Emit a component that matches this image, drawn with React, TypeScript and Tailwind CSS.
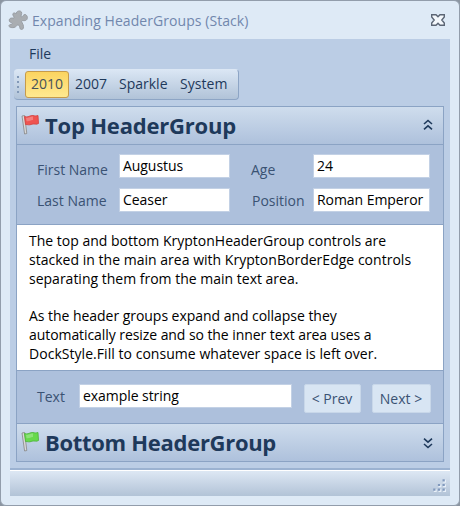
import type { ReactNode } from "react";

function Header({ title, color, dark, down }: { title: ReactNode; color: string; dark: string; down?: boolean }) {
  return (
    <div className="flex h-[37px] shrink-0 items-center bg-gradient-to-b from-[#cfdded] to-[#aec1dc] pr-[9px] pl-[4px]">
      <svg width="19" height="21" viewBox="0 0 19 21" className="-mt-[2px] shrink-0">
        <path d="M1 2 L3.6 1.5 L5.8 19.5 L3.6 20 Z" fill="#d8d8d8" stroke="#858585" strokeWidth="0.8" />
        <path d="M3.5 2.5 C7 4 9 1 12 1.5 C14 2 15 2 17 1.5 L17.5 9.5 C15 11 14 9.5 11 10.2 C8 11.5 7 10.5 4.5 10.5 Z" fill={color} stroke={dark} strokeWidth="0.8" />
        <path d="M5 3.5 C8 4.5 9 2 12 2.5 L12 6 C9 6 8 8 5.5 7 Z" fill="#fff" opacity="0.25" />
      </svg>
      {title}
      <svg width="12" height="12" viewBox="0 0 12 12" className={down ? "mt-px ml-auto rotate-180" : "-mt-px ml-auto"} fill="none" stroke="#1e395b" strokeWidth="1.6">
        <path d="M2 5 L6 1.5 L10 5 M2 10.3 L6 6.8 L10 10.3" />
      </svg>
    </div>
  );
}

function Field({ className, children }: { className: string; children: ReactNode }) {
  return (
    <div className={`flex h-[24px] items-center border border-[#c3d1e5] bg-white pb-[2px] pl-[3px] tracking-[-0.06px] text-black ${className}`}>{children}</div>
  );
}

const body = [
  ["The top and bottom KryptonHeaderGroup controls are", "tracking-[0px]"],
  ["stacked in the main area with KryptonBorderEdge controls", "tracking-[0.02px]"],
  ["separating them from the main text area.", "tracking-[0px]"],
  ["\u00a0", ""],
  ["As the header groups expand and collapse they", "tracking-[-0.04px]"],
  ["automatically resize and so the inner text area uses a", "tracking-[-0.07px]"],
  ["DockStyle.Fill to consume whatever space is left over.", "tracking-[0.04px]"],
];

export default function App() {
  return (
    <div className="h-[506px] w-[460px] bg-[#8b95a1] font-['Open_Sans','Noto_Sans',sans-serif] text-[14px] leading-[19px] whitespace-nowrap text-[#1e395b]">
      <div className="flex h-full flex-col rounded-[6px] border border-[#929dab] bg-[#deeaf6] px-[9px] pb-[9px]">
        <div className="flex h-[38px] shrink-0 items-center pr-[5px]">
          <svg width="20" height="21" viewBox="0 0 20 21" className="-ml-[2px] shrink-0">
            <path d="M8 4 C8 1 12 0 13.5 2 C14.5 4 12 6 13.5 7 C15 7 15 4 17.5 4.5 C20 6 20 9.5 17.5 10.5 C15.5 11 14.5 10 13.5 11.5 L15 14.5 C16 17 15.5 19.5 13.5 19.5 C11 19.5 12.5 16 10.5 15 C8.5 14.5 8.5 17 6 17.5 C3 18 0.5 17 1 15.5 C1.5 14 4 14.5 4.5 13.5 C4 12 1 13 1.2 10 C2 7 5 8.5 6 8 C7 7 4 5.5 5 3.5 C6 2.5 7.5 3 8 4 Z" fill="#a9adb1" stroke="#999ea4" strokeWidth="1" />
          </svg>
          <span className="ml-[4px] tracking-[0.06px] text-[#7187ad]">Expanding HeaderGroups (Stack)</span>
          <svg width="14" height="12" viewBox="0 0 14 12" className="ml-auto" fill="#f4f8fc" stroke="#5c6675" strokeWidth="1.4">
            <path d="M0.7 0.7 H5 L7 2.8 L9 0.7 H13.3 V2.9 L10.8 6 L13.3 9.1 V11.3 H9 L7 9.2 L5 11.3 H0.7 V9.1 L3.2 6 L0.7 2.9 Z" />
          </svg>
        </div>
        <div className="flex min-h-0 flex-1 flex-col bg-[#bbcde5]">
          <div className="flex h-[30px] shrink-0 items-center pb-[2px] pl-[19px]">File</div>
          <div className="ml-[4px] flex h-[31px] w-[225px] shrink-0 items-center rounded-[4px] border-t border-r border-b border-t-[#dce7f4] border-r-[#8da5c5] border-b-[#8da5c5] bg-gradient-to-b from-[#dae6f4] to-[#b1c3d8]">
            <div className="ml-[3px] flex h-[18px] w-[3px] flex-col justify-between">
              <i className="h-[2px] w-[2px] bg-[#8299b8]" />
              <i className="h-[2px] w-[2px] bg-[#8299b8]" />
              <i className="h-[2px] w-[2px] bg-[#8299b8]" />
              <i className="h-[2px] w-[2px] bg-[#8299b8]" />
            </div>
            <div className="ml-[5px] flex h-[27px] w-[44px] items-center justify-center rounded-[3px] border border-[#c69b4b] bg-gradient-to-b from-[#fbd45f] to-[#ffe990] pb-[2px] text-[#45525a]">2010</div>
            <span className="ml-[6px] w-[44px] pb-[2px]">2007</span>
            <span className="w-[61px] pb-[2px]">Sparkle</span>
            <span className="pb-[2px] tracking-[0.05px]">System</span>
          </div>
          <div className="mt-[6px] mr-[6px] ml-[6px] flex h-[356px] shrink-0 flex-col border border-[#8ba3c4]">
            <Header title={<b className="ml-[5px] text-[22px] font-bold tracking-[-0.2px]">Top HeaderGroup</b>} color="#ef5350" dark="#d3403e" />
            <div className="grid h-[81px] shrink-0 auto-rows-[24px] grid-cols-[82px_132px_62px_117px] items-start gap-y-[10px] border-y border-[#8ba3c4] bg-[#adc0dc] pt-[9px] pl-[20px] text-[#3a5273]">
              <span className="pt-[6px]">First Name</span><Field className="w-[111px]">Augustus</Field>
              <span className="pt-[6px]">Age</span><Field className="w-[117px]">24</Field>
              <span className="pt-[3px]">Last Name</span><Field className="w-[111px]">Ceaser</Field>
              <span className="pt-[3px] pl-px">Position</span><Field className="w-[117px]">Roman Emperor</Field>
            </div>
            <div className="h-[145px] shrink-0 bg-white pt-[7px] pl-[12px] leading-[18.75px] text-black">
              {body.map(([t, c], i) => <div key={i}><span className={c}>{t}</span></div>)}
            </div>
            <div className="flex h-[54px] shrink-0 border-y border-[#8ba3c4] bg-[#adc0dc] pt-[13px] pl-[20px] text-[#3a5273]">
              <span className="w-[42px] pt-[3px]">Text</span>
              <Field className="w-[213px]">example string</Field>
              <div className="ml-[12px] flex h-[29px] w-[57px] items-center justify-center rounded-[2px] border border-[#c8d7e9] bg-[#d8e5f3] pr-px pb-px">&lt; Prev</div>
              <div className="ml-[11px] flex h-[29px] w-[59px] items-center justify-center rounded-[2px] border border-[#c8d7e9] bg-[#d8e5f3] pr-px pb-px">Next &gt;</div>
            </div>
            <Header title={<b className="ml-[5px] text-[22px] font-bold tracking-[-0.3px]">Bottom HeaderGroup</b>} color="#67d94b" dark="#4bb338" down />
          </div>
          <div className="mt-auto flex h-[28px] shrink-0 items-end justify-end border-t-2 border-[#9bb2d1] bg-gradient-to-b from-[#dfe9f5] to-[#b2c3d7] pr-[4px] pb-[4px] shadow-[inset_0_1px_0_#fff]">
            <svg width="14" height="14" viewBox="0 0 15 15" fill="#e8f0f9">
              <path d="M12 2h3v3h-3z M7 7h3v3H7z M12 7h3v3h-3z M2 12h3v3H2z M7 12h3v3H7z M12 12h3v3h-3z" />
              <path fill="#8199bd" d="M11.3 1.3h2.4v2.4h-2.4z M6.3 6.3h2.4v2.4H6.3z M11.3 6.3h2.4v2.4h-2.4z M1.3 11.3h2.4v2.4H1.3z M6.3 11.3h2.4v2.4H6.3z M11.3 11.3h2.4v2.4h-2.4z" />
            </svg>
          </div>
        </div>
      </div>
    </div>
  );
}
